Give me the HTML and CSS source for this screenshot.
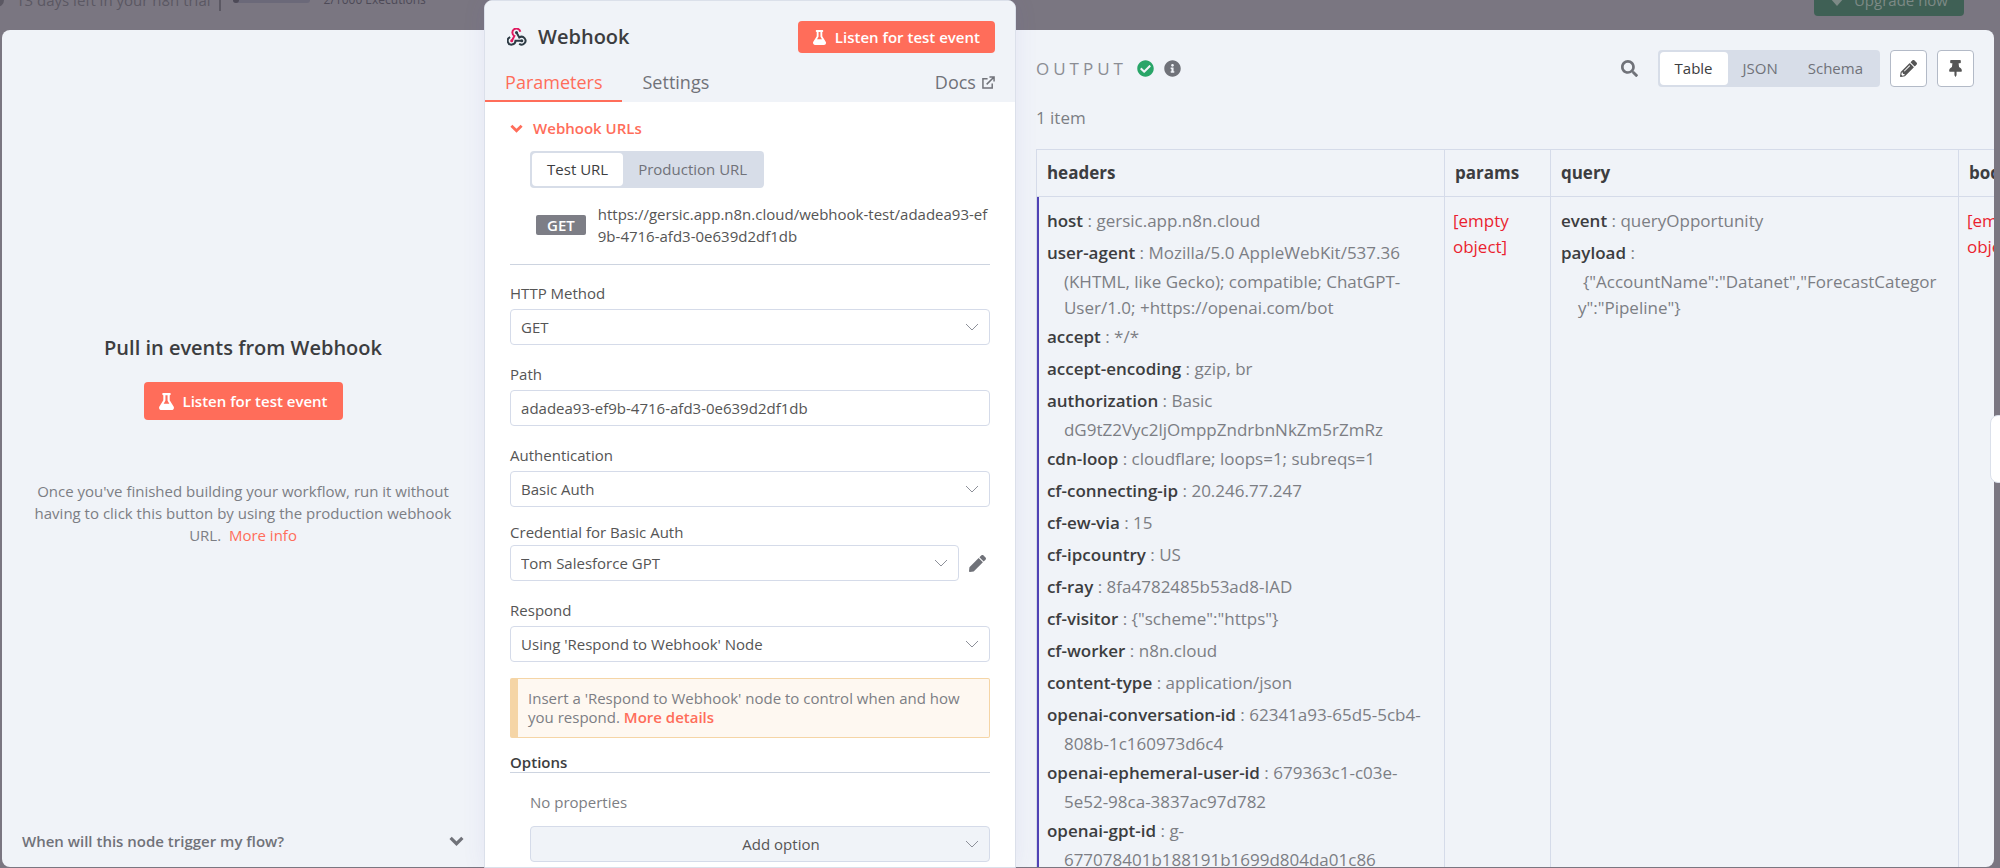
FILE: index.html
```
<!DOCTYPE html>
<html lang="en">
<head>
	<meta charset="utf-8">
	<title>Webhook</title>
	<link rel="stylesheet" href="styles.css">
</head>
<body>
<!-- shared icon shapes -->
<svg class="sprite" aria-hidden="true">
	<symbol id="flask" viewBox="0 0 448 512"><path d="M437.2 403.5L320 215V64h8c13.3 0 24-10.7 24-24V24c0-13.3-10.7-24-24-24H120c-13.3 0-24 10.7-24 24v16c0 13.3 10.7 24 24 24h8v151L10.8 403.5C-18.5 450.6 15.3 512 70.9 512h306.2c55.7 0 89.4-61.5 60.1-108.5zM137.9 320l48.2-77.6c3.7-5.2 5.8-11.6 5.8-18.4V64h64v160c0 6.9 2.2 13.2 5.8 18.4l48.2 77.6h-172z"/></symbol>
	<symbol id="arrow" viewBox="0 0 14 8"><path d="M1 1l6 6 6-6" fill="none" stroke="currentColor"/></symbol>
	<symbol id="chevron" viewBox="0 0 14 9"><path d="M1.5 1.5l5.5 5.5 5.5-5.5" fill="none" stroke="currentColor" stroke-width="3"/></symbol>
</svg>

<div class="app">
	<div class="topbar">
		<span class="dot"></span>
		<span class="trial">13 days left in your n8n trial</span>
		<span class="bar"><span class="bar-fill"></span></span>
		<span class="executions">2/1000 Executions</span>
		<button class="upgrade"><svg viewBox="0 0 14 12" width="14" height="12"><path d="M3 0h8l3 4-7 8-7-8z"/></svg>Upgrade now</button>
	</div>

	<div class="ndv">
		<!-- input -->
		<section class="panel input-panel">
			<div class="trigger">
				<h2>Pull in events from Webhook</h2>
				<button class="btn btn-large"><svg width="15" height="17"><use href="#flask"/></svg>Listen for test event</button>
				<p>Once you've finished building your workflow, run it without having to click this button by using the production webhook URL. &nbsp;<a href="#">More info</a></p>
			</div>
			<button class="faq">When will this node trigger my flow?<svg width="15" height="10"><use href="#chevron"/></svg></button>
		</section>

		<!-- settings -->
		<section class="main-panel">
			<header class="main-header">
				<div class="title-row">
					<svg class="line" viewBox="0 0 20 18" width="20" height="18" stroke-width="2">
						<path d="M13.3 3.8A4 4 0 1 0 7.4 8L5 12.5" stroke="#e0195f"/>
						<path d="M3.2 9.1A3.9 3.9 0 1 0 8.5 12.8H14.5" stroke="#2e3b45"/>
						<path d="M9.5 4.5L12.3 9.5A3.9 3.9 0 1 1 12.2 15.8" stroke="#2e3b45"/>
						<circle cx="9.5" cy="4.5" r="1.5" fill="#2e3b45"/><circle cx="4.7" cy="12.8" r="1.5" fill="#e0195f"/><circle cx="14.8" cy="12.8" r="1.5" fill="#2e3b45"/>
					</svg>
					<h1>Webhook</h1>
					<button class="btn"><svg width="13" height="15"><use href="#flask"/></svg>Listen for test event</button>
				</div>
				<nav class="tabs">
					<a class="tab active" href="#">Parameters</a>
					<a class="tab" href="#">Settings</a>
					<a class="tab docs" href="#">Docs<svg class="line" viewBox="0 0 14 14" width="13" height="13" stroke="currentColor" stroke-width="1.6"><path d="M6 3H1v10h10V8M8 1h5v5M13 1L5 9"/></svg></a>
				</nav>
			</header>

			<div class="main-body">
				<button class="urls-toggle"><svg width="13" height="9"><use href="#chevron"/></svg>Webhook URLs</button>
				<div class="urls">
					<div class="radio-group">
						<label><input type="radio" name="url" checked><span>Test URL</span></label>
						<label><input type="radio" name="url"><span>Production URL</span></label>
					</div>
					<div class="url-row">
						<span class="method">GET</span>
						<span class="url">https://gersic.app.n8n.cloud/webhook-test/adadea93-ef9b-4716-afd3-0e639d2df1db</span>
					</div>
				</div>
				<hr>

				<div class="field">
					<label for="method">HTTP Method</label>
					<div class="select"><select id="method"><option>GET</option></select><svg width="14" height="8"><use href="#arrow"/></svg></div>
				</div>
				<div class="field">
					<label for="path">Path</label>
					<input type="text" id="path" value="adadea93-ef9b-4716-afd3-0e639d2df1db">
				</div>
				<div class="field">
					<label for="auth">Authentication</label>
					<div class="select"><select id="auth"><option>Basic Auth</option></select><svg width="14" height="8"><use href="#arrow"/></svg></div>
				</div>
				<div class="field credential">
					<label for="cred">Credential for Basic Auth</label>
					<div class="cred-row">
						<div class="select"><select id="cred"><option>Tom Salesforce GPT</option></select><svg width="14" height="8"><use href="#arrow"/></svg></div>
						<button class="icon-btn" aria-label="Edit credential"><svg viewBox="0 0 512 512" width="17" height="17"><path d="M290.74 93.24l128.02 128.02-277.99 277.99-114.14 12.6C11.35 513.54-1.56 500.62.14 485.34l12.7-114.22 277.9-277.88zm207.2-19.06l-60.11-60.11c-18.75-18.75-49.16-18.75-67.91 0l-56.55 56.55 128.02 128.02 56.55-56.55c18.75-18.76 18.75-49.16 0-67.91z"/></svg></button>
					</div>
				</div>
				<div class="field">
					<label for="respond">Respond</label>
					<div class="select"><select id="respond"><option>Using 'Respond to Webhook' Node</option></select><svg width="14" height="8"><use href="#arrow"/></svg></div>
				</div>

				<div class="notice">Insert a 'Respond to Webhook' node to control when and how you respond. <a href="#">More details</a></div>

				<h3>Options</h3>
				<div class="options">
					<p>No properties</p>
					<div class="select add"><select aria-label="Add option"><option>Add option</option></select><svg width="14" height="8"><use href="#arrow"/></svg></div>
				</div>
			</div>
		</section>

		<!-- output -->
		<section class="panel output-panel">
			<div class="output-header">
				<span class="output-title">OUTPUT</span>
				<svg class="ok" viewBox="0 0 512 512" width="17" height="17"><path d="M504 256c0 136.967-111.033 248-248 248S8 392.967 8 256 119.033 8 256 8s248 111.033 248 248zM227.314 387.314l184-184c6.248-6.248 6.248-16.379 0-22.627l-22.627-22.627c-6.248-6.249-16.379-6.249-22.628 0L216 308.118l-70.059-70.059c-6.248-6.248-16.379-6.248-22.628 0l-22.627 22.627c-6.248 6.248-6.248 16.379 0 22.627l104 104c6.249 6.249 16.379 6.249 22.628.001z"/></svg>
				<svg class="info" viewBox="0 0 512 512" width="17" height="17"><path d="M256 8C119.043 8 8 119.083 8 256c0 136.997 111.043 248 248 248s248-111.003 248-248C504 119.083 392.957 8 256 8zm0 110c23.196 0 42 18.804 42 42s-18.804 42-42 42-42-18.804-42-42 18.804-42 42-42zm56 254c0 6.627-5.373 12-12 12h-88c-6.627 0-12-5.373-12-12v-24c0-6.627 5.373-12 12-12h12v-64h-12c-6.627 0-12-5.373-12-12v-24c0-6.627 5.373-12 12-12h64c6.627 0 12 5.373 12 12v100h12c6.627 0 12 5.373 12 12v24z"/></svg>
				<div class="tools">
					<button class="icon-btn search" aria-label="Search"><svg viewBox="0 0 512 512" width="17" height="17"><path d="M505 442.7L405.3 343c-4.5-4.5-10.6-7-17-7H372c27.6-35.3 44-79.7 44-128C416 93.1 322.9 0 208 0S0 93.1 0 208s93.1 208 208 208c48.3 0 92.7-16.4 128-44v16.3c0 6.4 2.5 12.5 7 17l99.7 99.7c9.4 9.4 24.6 9.4 33.9 0l28.3-28.3c9.4-9.4 9.4-24.6.1-34zM208 336c-70.7 0-128-57.2-128-128 0-70.7 57.2-128 128-128 70.7 0 128 57.2 128 128 0 70.7-57.2 128-128 128z"/></svg></button>
					<div class="radio-group">
						<label><input type="radio" name="view" checked><span>Table</span></label>
						<label><input type="radio" name="view"><span>JSON</span></label>
						<label><input type="radio" name="view"><span>Schema</span></label>
					</div>
					<button class="square" aria-label="Edit output"><svg viewBox="0 0 512 512" width="17" height="17"><path d="M497.9 142.1l-46.1 46.1c-4.7 4.7-12.3 4.7-17 0l-111-111c-4.7-4.7-4.7-12.3 0-17l46.1-46.1c18.7-18.7 49.1-18.7 67.9 0l60.1 60.1c18.8 18.7 18.8 49.1 0 67.9zM284.2 99.8L21.6 362.4.4 483.9c-2.9 16.4 11.4 30.6 27.8 27.8l121.5-21.3 262.6-262.6c4.7-4.7 4.7-12.3 0-17l-111-111c-4.8-4.7-12.4-4.7-17.1 0zM124.1 339.9c-5.5-5.5-5.5-14.3 0-19.8l154-154c5.5-5.5 14.3-5.5 19.8 0s5.5 14.3 0 19.8l-154 154c-5.5 5.5-14.3 5.5-19.8 0zM88 424h48v36.3l-64.5 11.3-31.1-31.1L51.7 376H88v48z"/></svg></button>
					<button class="square" aria-label="Pin data"><svg viewBox="0 0 384 512" width="13" height="17"><path d="M298.028 214.267L285.793 96H328c13.255 0 24-10.745 24-24V24c0-13.255-10.745-24-24-24H56C42.745 0 32 10.745 32 24v48c0 13.255 10.745 24 24 24h42.207L85.972 214.267C37.465 236.82 0 277.261 0 328c0 13.255 10.745 24 24 24h136v104.007c0 1.242.289 2.467.845 3.578l24 48c2.941 5.882 11.364 5.893 14.311 0l24-48a8.008 8.008 0 0 0 .845-3.578V352h136c13.255 0 24-10.745 24-24-.001-51.183-37.983-91.42-85.973-113.733z"/></svg></button>
				</div>
			</div>
			<p class="count">1 item</p>

			<div class="table-wrap">
				<table>
					<colgroup><col class="wide"><col class="narrow"><col class="wide"><col class="narrow"></colgroup>
					<thead>
						<tr><th>headers</th><th>params</th><th>query</th><th>body</th></tr>
					</thead>
					<tbody>
						<tr>
							<td>
								<ul>
									<li><b>host</b> : gersic.app.n8n.cloud</li>
									<li><b>user-agent</b> : Mozilla/5.0 AppleWebKit/537.36 (KHTML, like Gecko); compatible; ChatGPT-User/1.0; +https://openai.com/bot</li>
									<li><b>accept</b> : */*</li>
									<li><b>accept-encoding</b> : gzip, br</li>
									<li><b>authorization</b> : Basic dG9tZ2Vyc2ljOmppZndrbnNkZm5rZmRz</li>
									<li><b>cdn-loop</b> : cloudflare; loops=1; subreqs=1</li>
									<li><b>cf-connecting-ip</b> : 20.246.77.247</li>
									<li><b>cf-ew-via</b> : 15</li>
									<li><b>cf-ipcountry</b> : US</li>
									<li><b>cf-ray</b> : 8fa4782485b53ad8-IAD</li>
									<li><b>cf-visitor</b> : {"scheme":"https"}</li>
									<li><b>cf-worker</b> : n8n.cloud</li>
									<li><b>content-type</b> : application/json</li>
									<li><b>openai-conversation-id</b> : 62341a93-65d5-5cb4-808b-1c160973d6c4</li>
									<li><b>openai-ephemeral-user-id</b> : 679363c1-c03e-5e52-98ca-3837ac97d782</li>
									<li><b>openai-gpt-id</b> : g-677078401b188191b1699d804da01c86</li>
								</ul>
							</td>
							<td class="empty">[empty object]</td>
							<td>
								<ul>
									<li><b>event</b> : queryOpportunity</li>
									<li><b>payload</b> : <span class="json">{"AccountName":"Datanet","ForecastCategory":"Pipeline"}</span></li>
								</ul>
							</td>
							<td class="empty">[empty object]</td>
						</tr>
					</tbody>
				</table>
			</div>
		</section>
	</div>

	<div class="side-handle"></div>
</div>
</body>
</html>
```
FILE: styles.css
```
* {
  box-sizing: border-box;
}

body {
  margin: 0;
  font-family: 'Open Sans', sans-serif;
  font-size: 15px;
  line-height: 22px;
  color: #555555;
}

h1, h2, h3, p, ul {
  margin: 0;
  padding: 0;
}

a {
  color: #ff6d5a;
  text-decoration: none;
}

button, input, select {
  font: inherit;
  color: inherit;
}

button {
  padding: 0;
  border: 0;
  background: none;
  cursor: pointer;
}

svg {
  fill: currentColor;
  flex: none;
}

.line {
  fill: none;
}

.sprite {
  display: none;
}

.app {
  position: relative;
  height: 100vh;
  background: #7a7681;
  overflow: hidden;
}

/* TOP BAR, behind the dialog */
.topbar {
  position: absolute;
  top: -16px;
  left: -10px;
  right: 36px;
  height: 32px;
  display: flex;
  align-items: center;
  color: #5b5863;
}

.dot {
  width: 14px;
  height: 14px;
  margin-right: 12px;
  border-radius: 50%;
  background: #5b5863;
}

.trial {
  padding-right: 8px;
  border-right: 2px solid #5b5863;
}

.bar {
  width: 77px;
  height: 6px;
  margin: 0 14px 0 12px;
  border-radius: 3px;
  background: #6b6979;
}

.bar-fill {
  display: block;
  width: 6px;
  height: 6px;
  border-radius: 3px;
  background: #4d4a57;
}

.executions {
  font-size: 12px;
  color: #4d4a57;
}

.upgrade {
  display: flex;
  align-items: center;
  gap: 10px;
  height: 32px;
  margin-left: auto;
  padding: 0 16px;
  border-radius: 4px;
  background: #3f6055;
  color: #7d8a86;
  font-weight: 500;
}

/* DIALOG */
.ndv {
  position: relative;
  display: grid;
  grid-template-columns: 24.2% 26.7% 1fr;
  height: 100%;
  padding: 0 6px 0 2px;
}

.panel {
  min-width: 0;
  margin: 30px 0 1px;
  background: #f0f3f8;
  overflow: hidden;
}

/* INPUT */
.input-panel {
  display: flex;
  flex-direction: column;
  border-radius: 8px 0 0 8px;
}

.trigger {
  flex: 1;
  display: flex;
  flex-direction: column;
  align-items: center;
  justify-content: center;
  padding: 30px 32px 0;
  text-align: center;
}

h2 {
  margin-bottom: 21px;
  font-size: 20px;
  font-weight: 600;
  line-height: 26px;
  color: #3c3d40;
}

.trigger p {
  margin-top: 60px;
  color: #7c7e84;
}

.btn {
  display: flex;
  align-items: center;
  gap: 9px;
  height: 32px;
  padding: 0 15px;
  border-radius: 4px;
  background: #ff6d5a;
  color: #ffffff;
  font-weight: 600;
}

.btn-large {
  height: 38px;
}

.faq {
  display: flex;
  align-items: center;
  justify-content: space-between;
  padding: 0 20px;
  height: 40px;
  margin-bottom: 6px;
  font-weight: 600;
  color: #707279;
}

/* MAIN */
.main-panel {
  z-index: 1;
  border: 1px solid #dbe0ea;
  border-radius: 8px 8px 0 0;
  background: #ffffff;
  box-shadow: 0 0 24px rgba(90, 76, 194, 0.08);
  overflow: hidden;
}

.main-header {
  padding-top: 20px;
  background: #f0f3f8;
}

.title-row {
  display: flex;
  align-items: center;
  gap: 11px;
  padding: 0 20px 0 22px;
}

h1 {
  flex: 1;
  font-size: 20px;
  font-weight: 600;
  line-height: 30px;
  color: #3c3d40;
}

.tabs {
  display: flex;
  margin-top: 10px;
  padding-right: 20px;
}

.tab {
  padding: 7px 20px 6px;
  border-bottom: 2px solid transparent;
  font-size: 18px;
  font-weight: 500;
  line-height: 24px;
  color: #707279;
}

.tab.active {
  border-color: #ff6d5a;
  color: #ff6d5a;
}

.docs {
  display: flex;
  align-items: center;
  gap: 6px;
  margin-left: auto;
  padding-right: 0;
}

.main-body {
  padding: 14px 25px 40px;
}

.urls-toggle {
  display: flex;
  align-items: center;
  gap: 10px;
  height: 24px;
  font-weight: 600;
  color: #ff6d5a;
}

.urls {
  padding-left: 20px;
}

.radio-group {
  display: flex;
  width: fit-content;
  height: 37px;
  padding: 2px;
  border-radius: 4px;
  background: #d7dde8;
  font-weight: 500;
  color: #707279;
}

.urls .radio-group {
  margin: 11px 0 15px;
}

.radio-group label {
  display: flex;
}

.radio-group input {
  position: absolute;
  opacity: 0;
}

.radio-group span {
  padding: 0 15px;
  border-radius: 4px;
  line-height: 33px;
  cursor: pointer;
}

.radio-group input:checked + span {
  background: #ffffff;
  color: #3c3d40;
}

.url-row {
  display: flex;
  align-items: center;
  gap: 12px;
  padding-left: 6px;
}

.method {
  padding: 0 11px;
  border-radius: 2px;
  background: #7d7e86;
  color: #ffffff;
  font-weight: 600;
  line-height: 20px;
}

.url {
  word-break: break-all;
}

hr {
  height: 1px;
  margin: 17px 0;
  border: 0;
  background: #cdd4e0;
}

.field {
  display: flex;
  flex-direction: column;
  gap: 5px;
  margin-bottom: 18px;
}

/* the credential label hugs its select */
.credential {
  gap: 2px;
  margin-top: -4px;
}

.field input,
.select select {
  width: 100%;
  height: 36px;
  padding: 0 10px;
  border: 1px solid #d5dbe9;
  border-radius: 4px;
  background: #ffffff;
  appearance: none;
}

.select {
  position: relative;
  flex: 1;
}

.select svg {
  position: absolute;
  top: 14px;
  right: 11px;
  color: #8d9099;
  pointer-events: none;
}

.cred-row {
  display: flex;
  align-items: center;
  gap: 10px;
}

.icon-btn {
  display: flex;
  padding: 0 4px 0 0;
  color: #707279;
}

.notice {
  margin-top: -2px;
  padding: 10px 24px 10px 10px;
  border: 1px solid #f5d5a6;
  border-left-width: 8px;
  border-radius: 2px;
  background: #fef8f1;
  line-height: 19px;
  color: #7c7e84;
}

.notice a {
  font-weight: 600;
}

h3 {
  margin-top: 14px;
  border-bottom: 1px solid #cdd4e0;
  font-size: 15px;
  font-weight: 600;
  line-height: 20px;
  color: #3c3d40;
}

.options {
  padding: 18px 0 0 20px;
  color: #7c7e84;
}

.add {
  margin-top: 13px;
  color: #555555;
}

.add select {
  padding: 0 0 0 42px;
  background: #f0f3f8;
  text-align-last: center;
}

/* OUTPUT */
.output-panel {
  padding-left: 20px;
  border-radius: 0 8px 8px 0;
}

.output-header {
  display: flex;
  align-items: center;
  padding: 20px 20px 0 0;
}

.output-title {
  font-size: 17px;
  font-weight: 500;
  letter-spacing: 4px;
  color: #8b8d94;
}

.ok {
  margin: 0 10px;
  color: #29a568;
}

.info {
  color: #707279;
}

.tools {
  display: flex;
  align-items: center;
  gap: 10px;
  margin-left: auto;
}

.search {
  padding-right: 10px;
}

.square {
  display: flex;
  align-items: center;
  justify-content: center;
  width: 37px;
  height: 37px;
  border: 1px solid #b3bac7;
  border-radius: 4px;
  background: #ffffff;
}

.count {
  margin: 19px 0;
  font-size: 17px;
  line-height: 24px;
  color: #7c7e84;
}

.table-wrap {
  overflow: hidden;
}

table {
  width: 1028px;
  table-layout: fixed;
  border-collapse: separate;
  border-spacing: 0;
  border-left: 1px solid #d5dbe9;
  font-size: 17px;
  line-height: 26px;
  color: #7c7e84;
}

.wide {
  width: 408px;
}

.narrow {
  width: 106px;
}

th {
  height: 48px;
  padding: 0 10px;
  border: 1px solid #d5dbe9;
  border-left: 0;
  text-align: left;
  font-weight: 700;
  color: #3c3d40;
}

td {
  height: 720px;
  padding: 8px 10px 20px;
  border-right: 1px solid #d5dbe9;
  vertical-align: top;
  overflow-wrap: break-word;
}

td:first-child {
  padding-left: 8px;
  border-left: 2px solid #5043b5;
}

ul {
  list-style: none;
}

li {
  padding-left: 17px;
  text-indent: -17px;
}

li b {
  font-weight: 600;
  line-height: 32px;
  color: #3c3d40;
}

.json {
  display: block;
  text-indent: 5px;
  word-break: break-all;
}

.empty {
  padding: 11px 8px;
  color: #ea1f30;
}

/* handle on the window edge */
.side-handle {
  position: absolute;
  top: 415px;
  right: -10px;
  z-index: 2;
  width: 20px;
  height: 68px;
  border: 1px solid #dbe0ea;
  border-radius: 8px;
  background: #ffffff;
}
```
